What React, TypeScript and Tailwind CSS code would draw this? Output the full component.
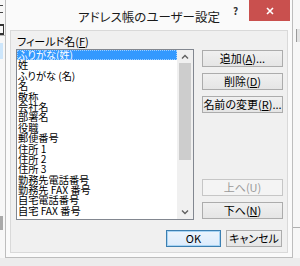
import type { ReactNode } from 'react'

const FIELDS = [
  'ふりがな(姓)',
  '姓',
  'ふりがな (名)',
  '名',
  '敬称',
  '会社名',
  '部署名',
  '役職',
  '郵便番号',
  '住所 1',
  '住所 2',
  '住所 3',
  '勤務先電話番号',
  '勤務先 FAX 番号',
  '自宅電話番号',
  '自宅 FAX 番号',
]

function Key({ children }: { children: ReactNode }) {
  return <span className="underline underline-offset-[1px]">{children}</span>
}

function Btn({
  children,
  disabled,
  primary,
  className = '',
}: {
  children: ReactNode
  disabled?: boolean
  primary?: boolean
  className?: string
}) {
  const tone = disabled
    ? 'border-[#c6c6c6] bg-[#f4f4f4] text-[#9a9a9a]'
    : primary
      ? 'border-[#3c7fb1] bg-gradient-to-b from-[#ecf4fc] to-[#dcecfc] text-black shadow-[inset_0_0_0_1px_#a8d4f4]'
      : 'border-[#acacac] bg-gradient-to-b from-[#f0f0f0] to-[#e5e5e5] text-black'
  return (
    <div className={`flex h-[17px] items-center justify-center border text-[11px] leading-none ${tone} ${className}`}>
      {children}
    </div>
  )
}

function Chevron({ up }: { up?: boolean }) {
  return (
    <svg width="8" height="5" viewBox="0 0 8 5" className="block">
      <polyline
        points={up ? '1,4.5 4,1.5 7,4.5' : '1,0.5 4,3.5 7,0.5'}
        fill="none"
        stroke="#606060"
        strokeWidth="1.4"
      />
    </svg>
  )
}

export default function App() {
  return (
    <div className="relative h-[266px] w-[300px] overflow-hidden bg-[#ececec] font-['Noto_Sans_CJK_JP','Noto_Sans',sans-serif] [font-feature-settings:'palt'] text-black">
      {/* window behind, left edge */}
      <div className="absolute left-0 top-0 flex h-[258px] w-[5px] flex-col bg-[#f7f7f7]">
        <div className="mt-[5px] h-[8px] w-[3px] border-y border-[#444]" />
        <div className="mt-[11px] h-[11px] w-[4px] border-y-2 border-r border-[#333]" />
        <div className="h-px w-[5px] bg-[#b8b8b8]" />
        <div className="mt-[7px] h-[16px] w-[3px] bg-[#cde6fb]" />
        <div className="mt-[157px] h-[14px] w-[3px] bg-[#a9a9a9]" />
      </div>
      {/* window behind, right edge */}
      <div className="absolute right-0 top-0 flex h-[258px] w-[7px] flex-col items-end bg-[#f7f7f7]">
        <div className="mt-[29px] h-[13px] w-[4px] border-l border-[#9a9a9a] bg-[#e3e3e3]" />
        <div className="mt-[185px] h-px w-[7px] bg-[#b0b0b0]" />
      </div>

      {/* dialog window */}
      <div className="absolute left-[5px] top-0 flex h-[258px] w-[288px] flex-col border border-t-0 border-[#bdbdbd] bg-[#fafafa]">
        <div className="relative flex h-[30px] shrink-0 justify-center pt-[9px] text-[12.5px] leading-[16px] text-[#1a1a1a]">
          アドレス帳のユーザー設定
          <span className="absolute left-[227px] top-[5px] text-[10px] font-bold leading-[12px] text-[#333]">?</span>
          <div className="absolute right-[2px] top-0 flex h-[21px] w-[41px] items-center justify-center bg-[#c9504e]">
            <svg width="8" height="8" viewBox="0 0 8 8">
              <path d="M1 1L7 7M7 1L1 7" stroke="#fff" strokeWidth="1.6" />
            </svg>
          </div>
        </div>

        <div className="mx-[4px] mb-[4px] flex flex-1 flex-col border border-[#d9d9d9] bg-[#f0f0f0] pl-[5px] pr-[4px] pt-[3px]">
          <div className="flex gap-[8px]">
            <div className="flex flex-col">
              <div className="h-[15px] pl-px text-[11px] leading-[15px]">
                フィールド名(<Key>F</Key>)
              </div>
              <div className="flex h-[171px] w-[178px] border border-[#828790] bg-white">
                <div className="flex flex-1 flex-col overflow-hidden text-[10.2px] leading-[10.4px]">
                  {FIELDS.map((f, i) => (
                    <div
                      key={f}
                      className={`h-[10.4px] shrink-0 whitespace-pre pl-px ${
                        i === 0 ? 'bg-[#3399ff] text-white outline-1 -outline-offset-1 outline-dotted outline-[#9fcfff]' : ''
                      }`}
                    >
                      {f}
                    </div>
                  ))}
                </div>
                <div className="flex w-[16px] flex-col items-center bg-[#f0f0f0]">
                  <div className="flex h-[13px] items-center">
                    <Chevron up />
                  </div>
                  <div className="h-[97px] w-[12px] bg-[#cdcdcd]" />
                  <div className="flex-1" />
                  <div className="flex h-[14px] items-center">
                    <Chevron />
                  </div>
                </div>
              </div>
            </div>

            <div className="flex w-[82px] flex-col pt-[16px]">
              <Btn>
                追加(<Key>A</Key>)...
              </Btn>
              <Btn className="mt-[6px]">
                削除(<Key>D</Key>)
              </Btn>
              <Btn className="mt-[6px]">
                名前の変更(<Key>R</Key>)...
              </Btn>
              <Btn disabled className="mt-[66px]">
                上へ(U)
              </Btn>
              <Btn className="mt-[6px]">
                下へ(<Key>N</Key>)
              </Btn>
            </div>
          </div>

          <div className="mt-[10px] flex justify-end gap-[5px] pr-px">
            <Btn primary className="w-[55px]">
              OK
            </Btn>
            <Btn className="w-[56px]">キャンセル</Btn>
          </div>
        </div>
      </div>
    </div>
  )
}
